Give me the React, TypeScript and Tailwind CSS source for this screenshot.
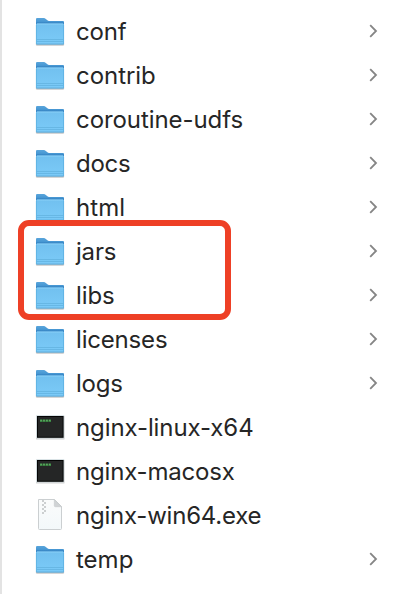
type Kind = "folder" | "terminal" | "document";

const entries: { name: string; kind: Kind; spacing: string }[] = [
  { name: "conf", kind: "folder", spacing: "tracking-[-0.2px]" },
  { name: "contrib", kind: "folder", spacing: "tracking-[-0.05px]" },
  { name: "coroutine-udfs", kind: "folder", spacing: "tracking-[-0.07px]" },
  { name: "docs", kind: "folder", spacing: "tracking-[-0.25px]" },
  { name: "html", kind: "folder", spacing: "tracking-[0.1px]" },
  { name: "jars", kind: "folder", spacing: "tracking-[-0.2px]" },
  { name: "libs", kind: "folder", spacing: "tracking-[-0.1px]" },
  { name: "licenses", kind: "folder", spacing: "tracking-[-0.18px]" },
  { name: "logs", kind: "folder", spacing: "tracking-[-0.25px]" },
  { name: "nginx-linux-x64", kind: "terminal", spacing: "tracking-[-0.1px]" },
  { name: "nginx-macosx", kind: "terminal", spacing: "tracking-[-0.18px]" },
  { name: "nginx-win64.exe", kind: "document", spacing: "tracking-[-0.22px]" },
  { name: "temp", kind: "folder", spacing: "" },
];

function FolderIcon() {
  return (
    <svg viewBox="0 0 32 32" className="size-8 shrink-0">
      <rect x="1.8" y="27" width="28.4" height="2.9" rx="1" fill="#000" opacity=".12" />
      <rect x="2" y="27" width="28" height="2.2" rx="1" fill="#000" opacity=".2" />
      <path d="M2 3.2Q2 2.1 3 2.1H10Q10.8 2.1 11.5 2.7L13.4 4.3Q14.1 4.9 15 4.9H29Q30 4.9 30 6V12H2Z" fill="url(#folder-back)" />
      <path d="M2 9Q2 7.6 3.2 7.6H28.8Q30 7.6 30 9V27.4Q30 28.4 29 28.4H3Q2 28.4 2 27.4Z" fill="url(#folder-front)" />
      <path d="M3 8H29" stroke="#92d4fa" strokeWidth=".8" />
      <path d="M2.4 9V28M29.6 9V28" stroke="#5baee0" strokeWidth=".8" />
      <path d="M2.5 23.5H29.5M2.5 25.5H29.5" stroke="#62b2e0" strokeWidth=".8" />
      <path d="M2.5 28H29.5" stroke="#5ba7d6" strokeWidth=".8" />
    </svg>
  );
}

function TerminalIcon() {
  return (
    <svg viewBox="0 0 32 32" className="size-8 shrink-0">
      <rect x="2" y="4" width="28.5" height="23.5" rx=".5" fill="#000" opacity=".18" />
      <rect x="2.2" y="3.2" width="28" height="23.2" fill="#d2dde0" />
      <rect x="3" y="4" width="26.6" height="21.8" fill="#050505" />
      <rect x="4" y="5" width="24.6" height="19.8" fill="#252626" />
      <path d="M6 8.7H17" stroke="#398441" strokeWidth="2.6" strokeDasharray="2.5 .4" />
      <path d="M6.5 8.3H16.5" stroke="#70bc73" strokeWidth="1" strokeDasharray="1.2 1.7" />
    </svg>
  );
}

function DocumentIcon() {
  return (
    <svg viewBox="0 0 32 32" className="mb-0.5 size-8 shrink-0">
      <path d="M4.5 .5H20.5L27.5 7.5V29.5Q27.5 30.5 26.5 30.5H5.5Q4.5 30.5 4.5 29.5Z" fill="url(#page-fill)" stroke="#cbcfd1" />
      <path d="M20.3 .6V6.7Q20.3 7.7 21.3 7.7H27.4Z" fill="#d0d3d5" stroke="#c4c8ca" strokeWidth=".6" />
      <path
        d="M8 1h2v2h-2zM10 3h2v2h-2zM8 5h2v2h-2zM10 7h2v2h-2zM8 9h2v2h-2zM10 11h2v2h-2zM8 13h2v2h-2z"
        fill="#cccfd0"
      />
    </svg>
  );
}

function EntryIcon({ kind }: { kind: Kind }) {
  if (kind === "terminal") return <TerminalIcon />;
  if (kind === "document") return <DocumentIcon />;
  return <FolderIcon />;
}

export default function App() {
  return (
    <div className="relative h-[594px] w-[404px] overflow-hidden border-l-2 border-[#e3e3e3] bg-white pt-2.5 font-['Inter','Liberation_Sans',sans-serif]">
      <svg className="absolute size-0">
        <defs>
          <linearGradient id="folder-back" x1="0" y1="0" x2="0" y2="1">
            <stop offset="0" stopColor="#5aa5db" />
            <stop offset=".35" stopColor="#4797d3" />
            <stop offset=".55" stopColor="#2f7dbd" />
          </linearGradient>
          <linearGradient id="folder-front" x1="0" y1="0" x2="0" y2="1">
            <stop offset="0" stopColor="#71c0ef" />
            <stop offset="1" stopColor="#7bcbf8" />
          </linearGradient>
          <linearGradient id="page-fill" x1="0" y1="0" x2="0" y2="1">
            <stop offset="0" stopColor="#fafbfb" />
            <stop offset="1" stopColor="#f3f8fa" />
          </linearGradient>
        </defs>
      </svg>
      <ul>
        {entries.map((e) => (
          <li key={e.name} className="flex h-11 items-center pr-[26px] pl-8">
            <EntryIcon kind={e.kind} />
            <span className={`ml-2.5 flex-1 text-[24px] leading-[42px] whitespace-nowrap text-[#262626] ${e.spacing}`}>
              {e.name}
            </span>
            {e.kind === "folder" && (
              <svg viewBox="0 0 10 16" className="mb-0.5 h-4 w-2.5" fill="none" stroke="#858585" strokeWidth="1.8">
                <path d="M2.2 2.2L8 8L2.2 13.8" />
              </svg>
            )}
          </li>
        ))}
      </ul>
      <div className="absolute top-[220px] left-4 h-[100px] w-[213px] rounded-[11px] border-6 border-[#ee4026]" />
    </div>
  );
}
